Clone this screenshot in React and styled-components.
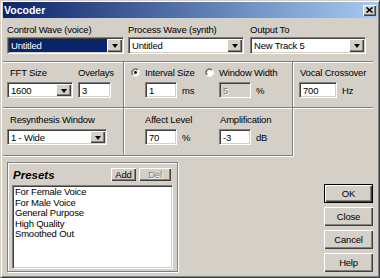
import React from 'react';
import styled, { createGlobalStyle } from 'styled-components';

const GlobalStyle = createGlobalStyle`
  html, body { margin: 0; padding: 0; background: #d4d0c8; }
  body { font-family: "Liberation Sans", Arial, sans-serif; }
`;

const Window = styled.div`
  width: 380px;
  height: 278px;
  box-sizing: border-box;
  background: #d4d0c8;
  border: 1px solid;
  border-color: #d4d0c8 #404040 #404040 #d4d0c8;
  box-shadow: inset 1px 1px #fff, inset -1px -1px #808080;
  padding: 1px 2px 2px 2px;
  display: flex;
  flex-direction: column;
  font-size: 9.5px;
  letter-spacing: -0.2px;
  color: #000;
  overflow: hidden;
`;

const TitleBar = styled.div`
  height: 16px;
  flex: none;
  display: flex;
  align-items: center;
  justify-content: space-between;
  padding: 0 1px 0 1px;
  background: linear-gradient(to right, #0a246a, #a6caf0);
`;

const TitleText = styled.span`
  color: #fff;
  font-weight: bold;
  font-size: 10.5px;
  letter-spacing: 0;
`;

const CloseBtn = styled.div`
  width: 13px;
  height: 11px;
  box-sizing: border-box;
  background: #d4d0c8;
  box-shadow: inset 1px 1px #fff, inset -1px -1px #404040, inset -2px -2px #808080;
  display: flex;
  align-items: center;
  justify-content: center;
`;

const TopRow = styled.div`
  display: flex;
  padding: 6px 0 0 4px;
`;

const Field = styled.div`
  display: flex;
  flex-direction: column;
  width: ${p => p.$w}px;
  margin-left: ${p => p.$ml || 0}px;
`;

const Label = styled.div`
  line-height: 11px;
  height: 11px;
  white-space: nowrap;
  padding-left: ${p => p.$indent || 0}px;
  margin-bottom: ${p => (p.$gap !== undefined ? p.$gap : 4)}px;
`;

const Sunken = styled.div`
  box-sizing: border-box;
  height: ${p => p.$h || 16}px;
  width: ${p => (p.$w ? `${p.$w}px` : '100%')};
  background: ${p => (p.$disabled ? '#d4d0c8' : '#fff')};
  border: 1px solid;
  border-color: #808080 #fff #fff #808080;
  box-shadow: inset 1px 1px #404040, inset -1px -1px #d4d0c8;
  padding: 1px;
  display: flex;
  align-items: stretch;
`;

const FieldText = styled.div`
  flex: 1;
  display: flex;
  align-items: center;
  padding-left: 2px;
  white-space: nowrap;
  overflow: hidden;
  background: ${p => (p.$selected ? '#0a246a' : 'transparent')};
  color: ${p => (p.$selected ? '#fff' : p.$disabled ? '#808080' : '#000')};
  text-shadow: ${p => (p.$disabled ? '1px 1px #fff' : 'none')};
`;

const DropBtn = styled.div`
  width: 15px;
  flex: none;
  box-sizing: border-box;
  background: #d4d0c8;
  box-shadow: inset 1px 1px #fff, inset -1px -1px #404040, inset -2px -2px #808080;
  display: flex;
  align-items: center;
  justify-content: center;
  &::after {
    content: '';
    border-left: 3.5px solid transparent;
    border-right: 3.5px solid transparent;
    border-top: 4px solid #000;
    margin-top: 1px;
  }
`;

const Grid = styled.div`
  margin: 7px 4px 0 0;
  display: grid;
  grid-template-columns: 121px 169px 80px;
  grid-template-rows: 46px 48px;
  border-top: 1px solid #808080;
  box-shadow: inset 0 1px #fff;
`;

const Cell = styled.div`
  box-sizing: border-box;
  display: flex;
  padding: ${p => p.$pt || 5}px 0 0 ${p => p.$pl || 4}px;
  gap: ${p => p.$gap || 0}px;
  border-right: ${p => (p.$r ? '1px solid #808080' : 'none')};
  border-bottom: ${p => (p.$b ? '1px solid #808080' : 'none')};
  box-shadow: ${p =>
    [p.$r && '1px 0 0 #fff', p.$b && '0 1px 0 #fff'].filter(Boolean).join(', ') || 'none'};
`;

const SubCol = styled.div`
  display: flex;
  flex-direction: column;
  width: ${p => (p.$w ? `${p.$w}px` : 'auto')};
`;

const RadioRow = styled.div`
  display: flex;
  align-items: center;
  gap: 5px;
  height: 11px;
  line-height: 11px;
  margin-bottom: 4px;
  white-space: nowrap;
`;

const InputRow = styled.div`
  display: flex;
  align-items: center;
  gap: 5px;
  padding-left: ${p => p.$pl || 0}px;
`;

const Unit = styled.span`
  white-space: nowrap;
`;

const Bottom = styled.div`
  display: flex;
  flex: 1;
`;

const PresetsPanel = styled.div`
  margin: 6px 0 0 4px;
  width: 171px;
  height: 110px;
  box-sizing: border-box;
  border: 1px solid #808080;
  box-shadow: inset 1px 1px #fff, 1px 1px 0 #fff;
  padding: 5px 5px 0 4px;
  display: flex;
  flex-direction: column;
`;

const PanelHeader = styled.div`
  display: flex;
  align-items: center;
  height: 13px;
  padding: 0 1px 0 1px;
`;

const PanelTitle = styled.span`
  font-weight: bold;
  font-style: italic;
  font-size: 11.5px;
  letter-spacing: 0;
  margin-right: auto;
`;

const SmallBtn = styled.div`
  height: 13px;
  width: ${p => p.$w}px;
  margin-left: ${p => p.$ml || 0}px;
  box-sizing: border-box;
  background: #d4d0c8;
  box-shadow: inset 1px 1px #fff, inset -1px -1px #404040, inset -2px -2px #808080;
  display: flex;
  align-items: center;
  justify-content: center;
  color: ${p => (p.$disabled ? '#808080' : '#000')};
  text-shadow: ${p => (p.$disabled ? '1px 1px #fff' : 'none')};
`;

const ListBox = styled.div`
  margin-top: 4px;
  width: 161px;
  height: 84px;
  box-sizing: border-box;
  background: #fff;
  border: 1px solid;
  border-color: #808080 #fff #fff #808080;
  box-shadow: inset 1px 1px #404040, inset -1px -1px #d4d0c8;
  padding: 1px 2px;
`;

const ListItem = styled.div`
  line-height: 10.5px;
  height: 10.5px;
  white-space: nowrap;
`;

const ButtonCol = styled.div`
  margin: 28px 4px 0 auto;
  display: flex;
  flex-direction: column;
  gap: 4px;
`;

const Button = styled.div`
  width: 49px;
  height: 19px;
  box-sizing: border-box;
  background: #d4d0c8;
  border: ${p => (p.$default ? '1px solid #000' : 'none')};
  box-shadow: inset 1px 1px #fff, inset -1px -1px #404040, inset -2px -2px #808080;
  display: flex;
  align-items: center;
  justify-content: center;
`;

const Radio = ({ checked }) => (
  <svg width="9" height="9" viewBox="0 0 10 10" style={{ flex: 'none' }}>
    <circle cx="5" cy="5" r="4" fill="#fff" />
    <path d="M1.8 8.2 A4.5 4.5 0 0 1 8.2 1.8" stroke="#808080" strokeWidth="1" fill="none" />
    <path d="M8.2 1.8 A4.5 4.5 0 0 1 1.8 8.2" stroke="#fff" strokeWidth="1" fill="none" />
    <path d="M2.5 7.5 A3.5 3.5 0 0 1 7.5 2.5" stroke="#404040" strokeWidth="1" fill="none" />
    {checked && <circle cx="5" cy="5" r="1.6" fill="#000" />}
  </svg>
);

const CloseIcon = () => (
  <svg width="7" height="6" viewBox="0 0 7 6">
    <path d="M0.5 0.5 L6.5 5.5 M6.5 0.5 L0.5 5.5" stroke="#000" strokeWidth="1.6" />
  </svg>
);

const Combo = ({ value, h, w, selected }) => (
  <Sunken $h={h} $w={w}>
    <FieldText $selected={selected}>{value}</FieldText>
    <DropBtn />
  </Sunken>
);

const TextBox = ({ value, w = 32, disabled }) => (
  <Sunken $w={w} $disabled={disabled}>
    <FieldText $disabled={disabled}>{value}</FieldText>
  </Sunken>
);

const presets = ['For Female Voice', 'For Male Voice', 'General Purpose', 'High Quality', 'Smoothed Out'];

export default function App() {
  return (
    <>
      <GlobalStyle />
      <Window>
        <TitleBar>
          <TitleText>Vocoder</TitleText>
          <CloseBtn><CloseIcon /></CloseBtn>
        </TitleBar>

        <TopRow>
          <Field $w={117}>
            <Label $gap={2}>Control Wave (voice)</Label>
            <Combo value="Untitled" h={17} selected />
          </Field>
          <Field $w={116} $ml={4}>
            <Label $gap={2}>Process Wave (synth)</Label>
            <Combo value="Untitled" h={17} />
          </Field>
          <Field $w={116} $ml={6}>
            <Label $gap={2}>Output To</Label>
            <Combo value="New Track 5" h={17} />
          </Field>
        </TopRow>

        <Grid>
          <Cell $r $b $gap={5}>
            <Field $w={66}>
              <Label $indent={3}>FFT Size</Label>
              <Combo value="1600" />
            </Field>
            <Field $w={33}>
              <Label>Overlays</Label>
              <TextBox value="3" w={33} />
            </Field>
          </Cell>
          <Cell $r $b $pl={7}>
            <SubCol $w={74}>
              <RadioRow><Radio checked />Interval Size</RadioRow>
              <InputRow $pl={14}><TextBox value="1" /><Unit>ms</Unit></InputRow>
            </SubCol>
            <SubCol>
              <RadioRow><Radio />Window Width</RadioRow>
              <InputRow $pl={14}><TextBox value="5" disabled /><Unit>%</Unit></InputRow>
            </SubCol>
          </Cell>
          <Cell $b $pl={6}>
            <SubCol>
              <Label $indent={1}>Vocal Crossover</Label>
              <InputRow><TextBox value="700" w={38} /><Unit>Hz</Unit></InputRow>
            </SubCol>
          </Cell>

          <Cell $r $b $pt={6}>
            <Field $w={100}>
              <Label $indent={3}>Resynthesis Window</Label>
              <Combo value="1 - Wide" />
            </Field>
          </Cell>
          <Cell $r $b $pl={7} $pt={6}>
            <SubCol $w={74}>
              <Label $indent={14}>Affect Level</Label>
              <InputRow $pl={14}><TextBox value="70" /><Unit>%</Unit></InputRow>
            </SubCol>
            <SubCol>
              <Label $indent={15}>Amplification</Label>
              <InputRow $pl={14}><TextBox value="-3" /><Unit>dB</Unit></InputRow>
            </SubCol>
          </Cell>
          <Cell />
        </Grid>

        <Bottom>
          <PresetsPanel>
            <PanelHeader>
              <PanelTitle>Presets</PanelTitle>
              <SmallBtn $w={25}>Add</SmallBtn>
              <SmallBtn $w={32} $ml={3} $disabled>Del</SmallBtn>
            </PanelHeader>
            <ListBox>
              {presets.map(p => <ListItem key={p}>{p}</ListItem>)}
            </ListBox>
          </PresetsPanel>
          <ButtonCol>
            <Button $default>OK</Button>
            <Button>Close</Button>
            <Button>Cancel</Button>
            <Button>Help</Button>
          </ButtonCol>
        </Bottom>
      </Window>
    </>
  );
}
